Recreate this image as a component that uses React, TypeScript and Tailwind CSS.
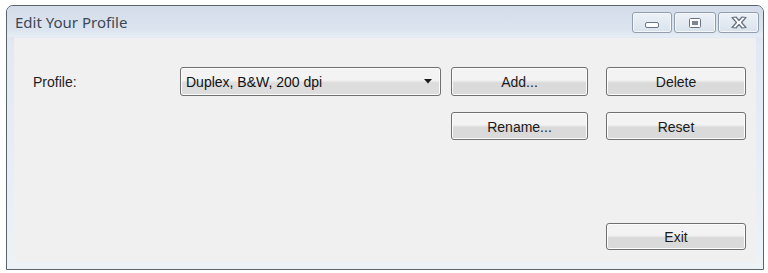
import React from "react";

const btn =
  "flex items-center justify-center pt-[2px] rounded-[3px] border border-[#707070] bg-gradient-to-b from-[#f3f3f3] from-45% to-[#dadada] to-55% shadow-[inset_0_0_0_1px_#fcfcfc] text-[14px] text-[#1a1a1a]";

function CapButton({ w, children }: { w: string; children: React.ReactNode }) {
  return (
    <div
      className={`${w} h-[21px] flex items-center justify-center rounded-[3px] border border-[#929eae] bg-gradient-to-b from-[#edf2f7] to-[#d9e2ec] shadow-[inset_0_0_0_1px_#f4f7fa]`}
    >
      {children}
    </div>
  );
}

export default function App() {
  return (
    <div
      className="w-[768px] h-[273px] bg-white pt-[5px] pl-[6px] pr-[4px] pb-[3px]"
      style={{ fontFamily: '"Liberation Sans", Arial, sans-serif' }}
    >
      <div className="h-full flex flex-col border border-[#5d636b] rounded-t-[7px] bg-gradient-to-b from-[#d2dce8] from-0% via-[#e2e9f2] via-15% to-[#edf2f7] overflow-hidden">
        <div className="h-[31px] flex items-start justify-between pl-[8px] pr-[4px] bg-gradient-to-b from-[#d3dce8] via-[#dbe4ef] via-75% to-[#e6edf5]">
          <div
            className="pt-[6px] text-[15px] leading-[20px] text-[#3d4857]"
            style={{ fontFamily: '"Noto Sans", "Open Sans", sans-serif' }}
          >
            Edit Your Profile
          </div>
          <div className="flex gap-[2px] pt-[6px]">
            <CapButton w="w-[40px]">
              <svg width="14" height="8" viewBox="0 0 14 8" className="mt-[5px]">
                <rect x="0.5" y="1.5" width="13" height="5" rx="1.5" fill="#fdfdfd" stroke="#6b7484" />
              </svg>
            </CapButton>
            <CapButton w="w-[42px]">
              <svg width="12" height="10" viewBox="0 0 12 10">
                <rect x="0.5" y="0.5" width="11" height="9" rx="1" fill="#fdfdfd" stroke="#6b7484" />
                <rect x="3" y="3" width="6" height="4" fill="#7d8696" />
              </svg>
            </CapButton>
            <CapButton w="w-[41px]">
              <svg width="16" height="13" viewBox="0 0 16 13">
                <path
                  d="M1 1.5 L5 1 L8 4.5 L11 1 L15 1.5 L10.5 6.5 L15 11.5 L11 12 L8 8.5 L5 12 L1 11.5 L5.5 6.5 Z"
                  fill="#fdfdfd"
                  stroke="#687183"
                  strokeWidth="1.2"
                  strokeLinejoin="round"
                />
              </svg>
            </CapButton>
          </div>
        </div>
        <div className="flex-1 flex flex-col px-[7px] pb-[7px]">
          <div className="flex-1 flex flex-col bg-[#f0f0f0] border-t border-[#e3e9f0]">
            <div className="flex items-center mt-[29px] pl-[19px]">
              <div className="w-[147px] pt-[2px] text-[14px] text-[#1e1e1e]">Profile:</div>
              <div className="w-[261px] h-[29px] flex items-center justify-between rounded-[3px] border border-[#707070] bg-gradient-to-b from-[#f3f3f3] from-45% to-[#dddddd] to-55% shadow-[inset_0_0_0_1px_#fbfbfb] pl-[5px] pr-[8px] text-[14px] text-[#111]">
                <span className="pt-[2px]">Duplex, B&amp;W, 200 dpi</span>
                <svg width="8" height="5" viewBox="0 0 8 5">
                  <path d="M0 0 H8 L4 4.5 Z" fill="#1a1a1a" />
                </svg>
              </div>
              <div className={`${btn} ml-[10px] w-[137px] h-[29px]`}>Add...</div>
              <div className={`${btn} ml-[18px] w-[140px] h-[29px]`}>Delete</div>
            </div>
            <div className="flex items-center mt-[16px] pl-[437px]">
              <div className={`${btn} w-[137px] h-[28px]`}>Rename...</div>
              <div className={`${btn} ml-[18px] w-[140px] h-[28px]`}>Reset</div>
            </div>
            <div className="mt-auto mb-[12px] pl-[592px] flex">
              <div className={`${btn} w-[140px] h-[27px]`}>Exit</div>
            </div>
          </div>
        </div>
      </div>
    </div>
  );
}
